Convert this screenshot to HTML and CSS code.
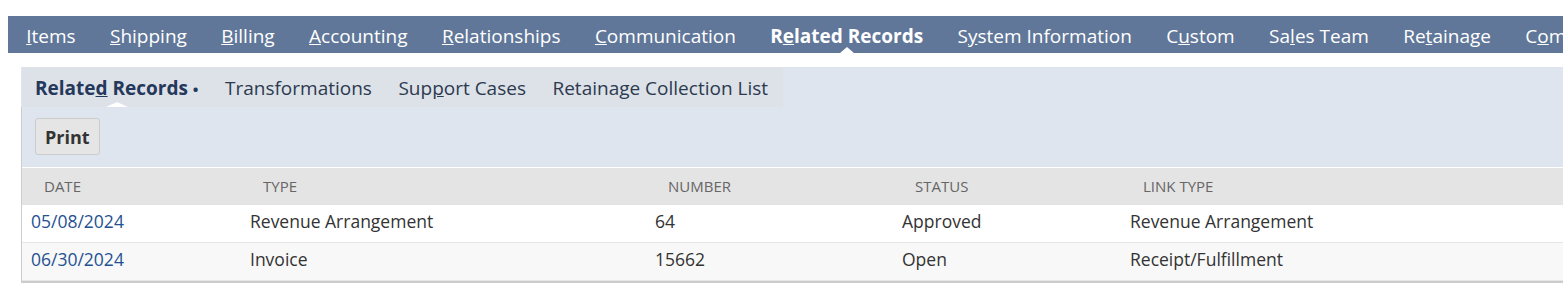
FILE: index.html
```html
<!DOCTYPE html>
<html lang="en">
<head>
  <meta charset="UTF-8">
  <title>Related Records</title>
  <link rel="stylesheet" href="styles.css">
</head>
<body>
<div class="page">
  <ul class="tabs">
    <li><u>I</u>tems</li>
    <li><u>S</u>hipping</li>
    <li><u>B</u>illing</li>
    <li><u>A</u>ccounting</li>
    <li><u>R</u>elationships</li>
    <li><u>C</u>ommunication</li>
    <li class="active">R<u>e</u>lated Records</li>
    <li>S<u>y</u>stem Information</li>
    <li>C<u>u</u>stom</li>
    <li>Sa<u>l</u>es Team</li>
    <li>Re<u>t</u>ainage</li>
    <li>C<u>o</u>mpetitors</li>
  </ul>

  <div class="panel">
    <ul class="subtabs">
      <li class="active">Relate<u>d</u> Records <span class="dot">&bull;</span></li>
      <li>Transformations</li>
      <li>Sup<u>p</u>ort Cases</li>
      <li>Retainage Collection List</li>
    </ul>
    <div class="toolbar">
      <button class="btn">Print</button>
    </div>
    <div class="grid">
      <div class="row head">
        <div>DATE</div><div>TYPE</div><div>NUMBER</div><div>STATUS</div><div>LINK TYPE</div>
      </div>
      <div class="row">
        <div><a href="#">05/08/2024</a></div><div>Revenue Arrangement</div><div>64</div><div>Approved</div><div>Revenue Arrangement</div>
      </div>
      <div class="row alt">
        <div><a href="#">06/30/2024</a></div><div>Invoice</div><div>15662</div><div>Open</div><div>Receipt/Fulfillment</div>
      </div>
    </div>
  </div>
</div>
</body>
</html>
```

FILE: styles.css
```css
html{
  overflow:hidden;
}
body{
  margin:0;
  font-family:"Open Sans", "Liberation Sans", sans-serif;
  color:#333;
}
.page{
  padding:16px 0 8px 8px;
  overflow:hidden;
}
ul{
  list-style:none;
  margin:0;
  padding:0;
}
.tabs{
  display:flex;
  width:1700px;
  background-color:#607799;
  height:37px;
  padding-left:1px;
}
.tabs li{
  color:#fff;
  font-size:19px;
  padding:3px 17.2px 0 17.2px;
  position:relative;
  line-height:34px;
  white-space:nowrap;
}
.tabs li.active{
  font-weight:bold;
}
.tabs li.active:after{
  content:"";
  position:absolute;
  left:50%;
  bottom:0;
  margin-left:-7px;
  border-left:7px solid transparent;
  border-right:7px solid transparent;
  border-bottom:6px solid #fff;
}
.panel{
  width:1700px;
  margin:14px 0 0 13px;
  background-color:#dfe5ef;
  border-left:1px solid #ccc;
  border-bottom:2px solid #ccc;
}
.subtabs{
  display:flex;
  width:max-content;
  background-color:#dde1e8;
  height:40px;
  padding:0 15px 0 13px;
  margin-left:-1px;
  border-left:1px solid #dfe5ef;
}
.subtabs li{
  font-size:19px;
  color:#2c3a4f;
  margin-right:26.5px;
  position:relative;
  padding-top:2px;
  line-height:38px;
  white-space:nowrap;
}
.subtabs li:last-child{
  margin-right:0;
}
.subtabs li.active{
  font-weight:bold;
  color:#24385b;
}
.subtabs .dot{
  font-size:15px;
}
.subtabs li.active:after{
  content:"";
  position:absolute;
  left:71px;
  bottom:0;
  border-left:11px solid transparent;
  border-right:11px solid transparent;
  border-bottom:5px solid #fff;
}
.toolbar{
  padding:11px 0 12px 13px;
}
.btn{
  font-family:inherit;
  font-size:18px;
  font-weight:bold;
  color:#333;
  background-color:#e5e5e5;
  border:1px solid #ccc;
  border-radius:3px;
  height:37px;
  padding:0 9px;
}
.grid{
  border-top:1px solid #fff;
}
.row{
  display:grid;
  grid-template-columns:219px 405px 247px 228px 1fr;
  height:37px;
  align-items:center;
  background-color:#fff;
  border-bottom:1px solid #e5e5e5;
  font-size:17.5px;
}
.row div{
  padding-left:9px;
  padding-bottom:6px;
}
.row.alt{
  background-color:#f8f8f8;
}
.row.head{
  background-color:#e4e4e4;
  border-bottom:none;
  font-size:15px;
  color:#666;
}
.row.head div{
  padding-left:22px;
  padding-bottom:1px;
}
a{
  color:#255192;
  text-decoration:none;
}
```
